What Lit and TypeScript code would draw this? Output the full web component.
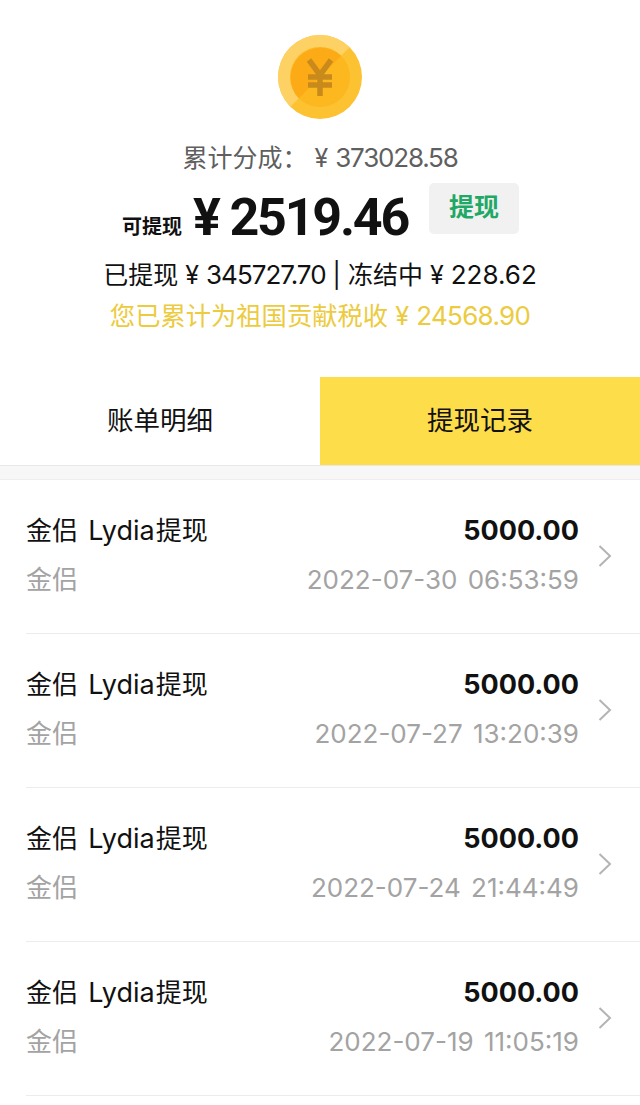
import { LitElement, html, css, svg } from "lit";
import { customElement } from "lit/decorators.js";

const rows = [
  { date: "2022-07-30", time: "06:53:59" },
  { date: "2022-07-27", time: "13:20:39" },
  { date: "2022-07-24", time: "21:44:49" },
  { date: "2022-07-19", time: "11:05:19" },
];

const coin = svg`<svg class="coin" viewBox="0 0 84 84" width="84" height="84">
  <circle cx="42" cy="42" r="42" fill="#fcc232"/>
  <path d="M71.7 12.3A42 42 0 0 0 12.3 71.7Z" fill="#fdd163"/>
  <circle cx="42" cy="42" r="30" fill="#fdb71f"/>
  <path d="M63.2 20.8A30 30 0 0 0 20.8 63.2Z" fill="#fcaa16"/>
  <path d="M31 25L42 40L53 25M30 42H54M30 50H54M42 40V61" fill="none" stroke="#c98a1c" stroke-width="5.5"/>
</svg>`;

const chevron = svg`<svg class="chev" viewBox="0 0 14 22" width="14" height="22"><path d="M1.5 1L12 11L1.5 21" fill="none" stroke="#b4b4b4" stroke-width="2"/></svg>`;

@customElement("app-root")
export class AppRoot extends LitElement {
  static styles = css`
    :host {
      display: block;
      width: 640px;
      height: 1105px;
      overflow: hidden;
      background: #fff;
      font-family: "Inter", "Noto Sans CJK SC", sans-serif;
      color: #111;
    }
    .head {
      height: 377px;
      box-sizing: border-box;
      padding-top: 35px;
      display: flex;
      flex-direction: column;
      align-items: center;
    }
    .coin { display: block; }
    .total {
      margin-top: 21px;
      height: 36px;
      line-height: 36px;
      font-size: 25px;
      color: #5f5f5f;
      white-space: pre;
    }
    .num { font-size: 26px; }
    .tight-a { letter-spacing: -1.2px; }
    .tight-b { letter-spacing: -1px; }
    .tight-c { letter-spacing: -0.7px; }
    .main {
      margin-top: 10px;
      height: 62px;
      width: 640px;
      position: relative;
      display: flex;
      align-items: flex-end;
      padding-left: 122px;
      box-sizing: border-box;
    }
    .main .lab {
      font-size: 20px;
      font-weight: 700;
      line-height: 26px;
      margin-bottom: 8px;
      width: 71px;
    }
    .main .amt {
      font-family: "Roboto", "Noto Sans CJK SC", sans-serif;
      font-size: 52px;
      font-weight: 700;
      line-height: 61px;
      white-space: pre;
      letter-spacing: -2.2px;
    }
    .btn {
      position: absolute;
      left: 429px;
      top: -3px;
      width: 90px;
      height: 51px;
      box-sizing: border-box;
      padding-top: 7px;
      text-align: center;
      background: #f1f1f1;
      border-radius: 5px;
      color: #1fa866;
      font-size: 25px;
      line-height: 34px;
      font-weight: 700;
    }
    .line {
      margin-top: 9px;
      font-size: 25px;
      line-height: 36px;
      white-space: pre;
    }
    .gold {
      margin-top: 5px;
      font-size: 25.3px;
      line-height: 36px;
      color: #eccb3e;
      white-space: pre;
    }
    .tabs { display: flex; height: 88px; }
    .tab {
      flex: 1;
      display: flex;
      align-items: center;
      justify-content: center;
      font-size: 26.5px;
      padding-bottom: 5px;
      box-sizing: border-box;
    }
    .tab.on { background: #fedd4b; }
    .band {
      height: 15px;
      box-sizing: border-box;
      background: #f8f7f7;
      border-top: 1px solid #e8e8e8;
      border-bottom: 1px solid #eeeeee;
    }
    .row {
      height: 154px;
      box-sizing: border-box;
      margin-left: 26px;
      border-bottom: 1px solid #ececec;
      position: relative;
      padding: 24px 61px 0 0;
      display: grid;
      grid-template-columns: auto auto;
      justify-content: space-between;
      grid-auto-rows: 49px;
      align-items: center;
      font-size: 26px;
      word-spacing: 3px;
    }
    .latin { font-size: 27px; margin-right: 1px; }
    .amount { font-weight: 700; text-align: right; font-size: 27px; padding-top: 4px; }
    .sub { color: #a3a3a3; }
    .date { color: #a3a3a3; text-align: right; white-space: pre; padding-top: 4px; }
    .chev { position: absolute; right: 28px; top: 65px; }
  `;

  render() {
    return html`
      <section class="head">
        ${coin}
        <div class="total">累计分成： ¥ <span class="num tight-a">373028.58</span></div>
        <div class="main">
          <span class="lab">可提现</span>
          <span class="amt">¥ 2519.46</span>
          <span class="btn">提现</span>
        </div>
        <div class="line">已提现 ¥ <span class="num tight-b">345727.70</span> | 冻结中 ¥ <span class="num">228.62</span></div>
        <div class="gold">您已累计为祖国贡献税收 ¥ <span class="num tight-c">24568.90</span></div>
      </section>
      <nav class="tabs">
        <div class="tab">账单明细</div>
        <div class="tab on">提现记录</div>
      </nav>
      <div class="band"></div>
      ${rows.map(
        (r) => html`<div class="row">
          <span>金侣 <span class="latin">Lydia</span>提现</span>
          <span class="amount">5000.00</span>
          <span class="sub">金侣</span>
          <span class="date">${r.date} ${r.time}</span>
          ${chevron}
        </div>`
      )}
    `;
  }
}
